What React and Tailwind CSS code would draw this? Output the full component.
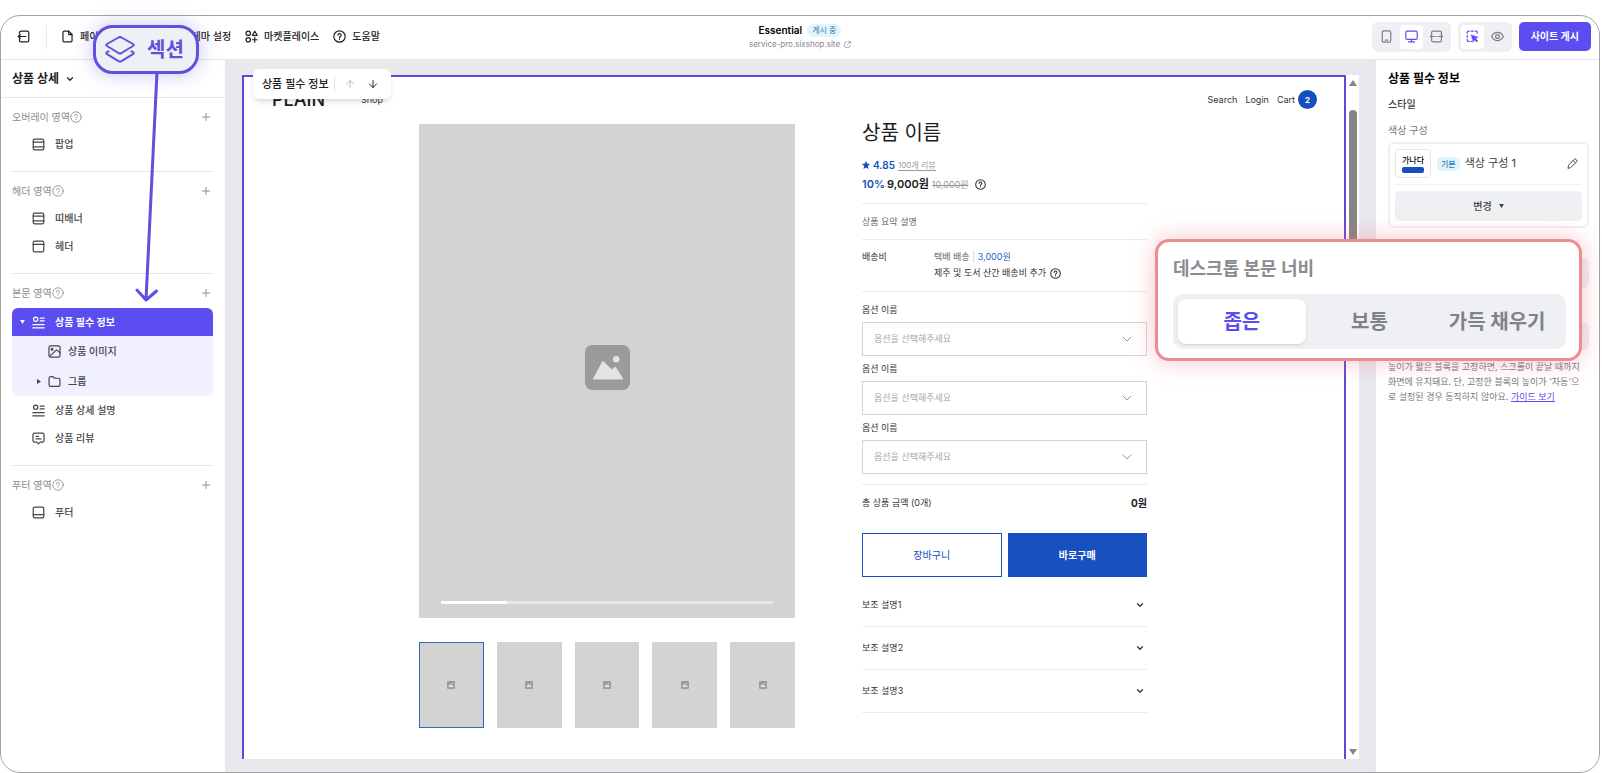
import React, { useState } from "react";
import { ArrowDown, ArrowUp, ChevronDown, Plus } from "lucide-react";

const PAGE_FONT = "font-['Inter','Noto_Sans_CJK_KR',sans-serif]";

// small line icons, all on a 16x16 grid
const ICONS = {
  exit: (
    <>
      <path d="M3 5V3.5A2 2 0 0 1 5 1.5h7.5a2 2 0 0 1 2 2v9a2 2 0 0 1-2 2H5a2 2 0 0 1-2-2V11" />
      <path d="M11 8H1.5M4 5.8 1.5 8 4 10.2" />
    </>
  ),
  file: (
    <>
      <path d="M9.5 1.5H4a1.6 1.6 0 0 0-1.6 1.6v9.8A1.6 1.6 0 0 0 4 14.5h8a1.6 1.6 0 0 0 1.6-1.6V5.6z" />
      <path d="M9.5 1.5v4.1h4.1" />
    </>
  ),
  market: (
    <>
      <circle cx="4" cy="4" r="2.7" />
      <circle cx="4" cy="12" r="2.7" />
      <path d="M12 1.5 15 6.5H9z" />
      <path d="M12 9v6M9 12h6" />
    </>
  ),
  help: (
    <>
      <circle cx="8" cy="8" r="7" />
      <path d="M6 6.4a2 2 0 1 1 2.9 1.8c-.6.3-.9.6-.9 1.2M8 11.3v.5" />
    </>
  ),
  popup: (
    <>
      <rect x="1.5" y="1.5" width="13" height="13" rx="2" />
      <path d="M1.5 5h13M1.5 11h13" />
    </>
  ),
  header: (
    <>
      <rect x="1.5" y="1.5" width="13" height="13" rx="2" />
      <path d="M1.5 5.5h13" />
    </>
  ),
  footer: (
    <>
      <rect x="1.5" y="1.5" width="13" height="13" rx="2" />
      <path d="M1.5 10.5h13" />
    </>
  ),
  detail: (
    <>
      <circle cx="4.5" cy="4" r="2.6" />
      <path d="M10 2.5h5M10 6h5M1 10.5h14M1 14.5h14" />
    </>
  ),
  image: (
    <>
      <rect x="1.2" y="1.2" width="13.6" height="13.6" rx="2" />
      <circle cx="5" cy="5.2" r="1.1" />
      <path d="M2 14 10.5 6l4.3 3.5" />
    </>
  ),
  folder: (
    <path d="M1.3 4a2 2 0 0 1 2-2h2.9l1.8 2h4.7a2 2 0 0 1 2 2v6a2 2 0 0 1-2 2H3.3a2 2 0 0 1-2-2z" />
  ),
  review: (
    <>
      <path d="M3.2 1.5h9.6a2 2 0 0 1 2 2v7a2 2 0 0 1-2 2h-2.6L8 14.7l-2.2-2.2H3.2a2 2 0 0 1-2-2v-7a2 2 0 0 1 2-2z" />
      <path d="M5 5.5h3M5 8.5h6" />
    </>
  ),
  external: (
    <>
      <path d="M6 2.5H3.5a2 2 0 0 0-2 2v8a2 2 0 0 0 2 2h8a2 2 0 0 0 2-2V10" />
      <path d="M9.5 1.5h5v5M14.5 1.5 8 8" />
    </>
  ),
  phone: (
    <>
      <rect x="2.8" y="1" width="10.4" height="14" rx="2" />
      <path d="M6.5 12.5h3" />
    </>
  ),
  desktop: (
    <>
      <rect x="1" y="1.5" width="14" height="10" rx="1.8" />
      <path d="M8 11.5v3M4.5 14.7h7" />
    </>
  ),
  fluid: (
    <>
      <path d="M2 5.5V3a1.5 1.5 0 0 1 1.5-1.5h9A1.5 1.5 0 0 1 14 3v2.5M2 10.5V13a1.5 1.5 0 0 0 1.5 1.5h9A1.5 1.5 0 0 0 14 13v-2.5" />
      <path d="M.5 8h5M10.5 8h5M2 6.6.5 8 2 9.4M14 6.6 15.5 8 14 9.4M7.5 8h1" />
    </>
  ),
  select: (
    <>
      <path d="M1.5 4V3A1.5 1.5 0 0 1 3 1.5h1M6.5 1.5H9M11.5 1.5h1A1.5 1.5 0 0 1 14 3v1M1.5 6.5V9M1.5 11.5v1A1.5 1.5 0 0 0 3 14h1M6.5 14h1" />
      <path d="m6.5 6 8.5 3-3.3 1.5 2.8 2.8-1.7 1.5-2.6-2.9-1.3 2.6z" fill="currentColor" strokeWidth="0.6" />
    </>
  ),
  eye: (
    <>
      <path d="M.8 8S3.3 3 8 3s7.2 5 7.2 5-2.5 5-7.2 5S.8 8 .8 8z" />
      <circle cx="8" cy="8" r="2.4" />
    </>
  ),
  pencil: (
    <>
      <path d="m1.5 14.5.9-4.2 8-8.3a1.9 1.9 0 0 1 2.7 0l.9.9a1.9 1.9 0 0 1 0 2.700l-8.300 8z" />
      <path d="m9 3.8 3.3 3.3" />
    </>
  ),
};

function Icon({ name, className = "size-3", stroke = 1.5 }) {
  return (
    <svg
      viewBox="0 0 16 16"
      fill="none"
      stroke="currentColor"
      strokeWidth={stroke}
      strokeLinecap="round"
      strokeLinejoin="round"
      aria-hidden="true"
      className={`shrink-0 ${className}`}
    >
      {ICONS[name]}
    </svg>
  );
}

function Photo({ className }) {
  return (
    <svg viewBox="0 0 44 44" className={className} aria-hidden="true">
      <rect width="44" height="44" rx="7" fill="#9b9b9b" />
      <path
        d="M8.5 33 17.5 16.5 26 25l3.5-3L36.5 33z"
        fill="#e3e3e3"
        stroke="#e3e3e3"
        strokeWidth="1.5"
        strokeLinejoin="round"
      />
      <circle cx="30.5" cy="14" r="3.2" fill="#e3e3e3" />
    </svg>
  );
}

function TopBar() {
  return (
    <header className="grid grid-cols-[1fr_auto_1fr] items-center h-11 pb-0.5 border-b border-[#e4e5e9] text-[10px] text-[#222]">
      <div className="flex items-center h-full">
        <button aria-label="나가기" className="ml-4">
          <Icon name="exit" className="size-[13px]" />
        </button>
        <span className="ml-4 w-px h-6 bg-[#e9eaed]" />
        <nav className="flex items-center gap-[14px] ml-[14px] font-medium">
          <a href="#pages" className="flex items-center gap-[6px]">
            <Icon name="file" className="size-[13px]" />
            페이지
          </a>
          <a href="#theme" className="ml-[70px]">
            테마 설정
          </a>
          <a href="#market" className="flex items-center gap-[6px]">
            <Icon name="market" className="size-[13px]" />
            마켓플레이스
          </a>
          <a href="#help" className="flex items-center gap-[6px]">
            <Icon name="help" className="size-[13px]" />
            도움말
          </a>
        </nav>
      </div>

      <div className="flex flex-col items-center">
        <div className="flex items-center gap-[5px] h-4">
          <strong className="font-semibold text-black">Essential</strong>
          <span className="px-[5px] rounded-full bg-[#e4f4fe] text-[8px] leading-[13px] text-[#2b7bb0]">게시 중</span>
        </div>
        <a href="#site" className="flex items-center gap-1 text-[8px] leading-[13px] text-[#85878c]">
          service-pro.sixshop.site
          <Icon name="external" className="size-[7px]" />
        </a>
      </div>

      <div className="flex items-center justify-end gap-[7px] pr-2">
        <div className="flex items-center gap-0.5 p-[3px] rounded-md bg-[#eff0f3] text-[#7b7e85]">
          <button aria-label="모바일" className="grid place-items-center w-[23px] h-6">
            <Icon name="phone" className="size-[13px]" />
          </button>
          <button aria-label="데스크톱" className="grid place-items-center w-[23px] h-6 rounded bg-white text-[#5b4df0]">
            <Icon name="desktop" className="size-[13px]" />
          </button>
          <button aria-label="유동 너비" className="grid place-items-center w-[23px] h-6">
            <Icon name="fluid" className="size-[13px]" />
          </button>
        </div>
        <div className="flex items-center gap-0.5 p-[3px] rounded-md bg-[#eff0f3] text-[#7b7e85]">
          <button aria-label="선택" className="grid place-items-center w-[23px] h-6 rounded bg-white text-[#5b4df0]">
            <Icon name="select" className="size-[13px]" />
          </button>
          <button aria-label="미리보기" className="grid place-items-center w-[23px] h-6">
            <Icon name="eye" className="size-[13px]" />
          </button>
        </div>
        <button className="px-3 h-[29px] rounded-[5px] bg-[#5b4df0] font-bold text-white">사이트 게시</button>
      </div>
    </header>
  );
}

function Area({ title, last, children }) {
  return (
    <section className={`ml-[11px] mr-3 pt-[6px] pb-[13px] ${last ? "" : "border-b border-[#e6e7ea]"}`}>
      <div className="flex items-center justify-between h-[26px] pr-px text-[#8a8c91]">
        <h3 className="flex items-center">
          {title}
          <Icon name="help" className="size-3" stroke={1.1} />
        </h3>
        <button aria-label={`${title} 추가`}>
          <Plus size={12} strokeWidth={2} />
        </button>
      </div>
      {children}
    </section>
  );
}

function Item({ icon, label }) {
  return (
    <a href="#item" className="flex items-center gap-[10px] h-7 pl-5 font-medium text-[#44464a]">
      <Icon name={icon} className="size-[13px]" />
      {label}
    </a>
  );
}

function LeftPanel() {
  return (
    <aside className="w-[225px] shrink-0 border-r border-[#e4e5e9] text-[10px]">
      <button className="flex items-center gap-[6px] w-full h-[38px] px-[11px] border-b border-[#e6e7ea] text-[12px] font-bold text-[#1d1d1f]">
        상품 상세
        <ChevronDown size={10} strokeWidth={3} />
      </button>
      <Area title="오버레이 영역">
        <Item icon="popup" label="팝업" />
      </Area>
      <Area title="헤더 영역">
        <Item icon="popup" label="띠배너" />
        <Item icon="header" label="헤더" />
      </Area>
      <Area title="본문 영역">
        <div className="mt-0.5 rounded-md overflow-hidden bg-[#f1f0fe] font-medium text-[#44464a]">
          <a href="#item" className="flex items-center h-7 pl-2 bg-[#5b4df0] font-bold text-white">
            <svg viewBox="0 0 6 5" className="w-[5px] h-1 mr-[7px]" fill="currentColor" aria-hidden="true">
              <path d="M0 0h6L3 5z" />
            </svg>
            <Icon name="detail" className="size-[13px] mr-[10px]" />
            상품 필수 정보
          </a>
          <a href="#item" className="flex items-center gap-[7px] h-[30px] pl-9">
            <Icon name="image" className="size-[13px]" />
            상품 이미지
          </a>
          <a href="#item" className="flex items-center gap-[7px] h-[30px] pl-[25px]">
            <svg viewBox="0 0 5 6" className="w-1 h-[5px]" fill="currentColor" aria-hidden="true">
              <path d="M0 0v6l5-3z" />
            </svg>
            <Icon name="folder" className="size-[13px]" />
            그룹
          </a>
        </div>
        <Item icon="detail" label="상품 상세 설명" />
        <Item icon="review" label="상품 리뷰" />
      </Area>
      <Area title="푸터 영역" last>
        <Item icon="footer" label="푸터" />
      </Area>
    </aside>
  );
}

function Gallery() {
  return (
    <div className="w-[376px] shrink-0">
      <div className="relative grid place-items-center h-[494px] pb-2 bg-[#d3d3d3]">
        <Photo className="size-[45px]" />
        <div className="absolute inset-x-[22px] bottom-[14px] h-[3px] bg-[#e6e6e6]">
          <div className="w-1/5 h-full bg-white" />
        </div>
      </div>
      <div className="grid grid-cols-5 gap-[13px] mt-6">
        {[1, 2, 3, 4, 5].map((n) => (
          <button
            key={n}
            aria-label={`상품 이미지 ${n}`}
            className={`grid place-items-center h-[86px] bg-[#d3d3d3] ${n === 1 ? "border border-[#2f6bc4]" : ""}`}
          >
            <Photo className="size-2" />
          </button>
        ))}
      </div>
    </div>
  );
}

function OptionSelect({ id }) {
  return (
    <div>
      <label htmlFor={id} className="block h-[25px] leading-[25px] text-[#333]">
        옵션 이름
      </label>
      <div className="relative">
        <select id={id} className="appearance-none w-full h-[34px] px-[11px] border border-[#d4d4d4] bg-white text-[#a8a8a8]">
          <option>옵션을 선택해주세요</option>
        </select>
        <ChevronDown size={16} strokeWidth={1.5} className="absolute right-3 top-[9px] text-[#999] pointer-events-none" />
      </div>
    </div>
  );
}

function ProductInfo() {
  return (
    <div className="flex-1 pr-[22px] text-[9px] text-[#333]">
      <h1 className="pt-px text-[20px] leading-4 text-[#1c1c1e]">상품 이름</h1>
      <div className="flex items-center gap-[3px] h-5 mt-[14px]">
        <svg viewBox="0 0 20 20" className="size-2" fill="#1651bf" aria-hidden="true">
          <path d="m10 0 3 6.5 7 .9-5.2 4.9L16.2 20 10 16.200 3.800 20l1.400-7.700L0 7.400l7-.9z" />
        </svg>
        <b className="text-[10px] font-semibold text-[#1651bf]">4.85</b>
        <a href="#reviews" className="text-[8px] leading-[10px] text-[#999] border-b border-[#999]">100개 리뷰</a>
      </div>
      <div className="flex items-center gap-[2px] h-5 pb-px text-[11px]">
        <b className="text-[#1651bf] font-semibold">10%</b>
        <b className="font-semibold text-[#1c1c1e]">9,000원</b>
        <s className="ml-px text-[9px] text-[#999]">10,000원</s>
        <Icon name="help" className="size-[11px] ml-1" />
      </div>
      <div className="mt-2 border-y border-[#ececec] h-[37px] leading-[35px] text-[#666]">상품 요약 설명</div>
      <dl className="flex h-[52px] pt-[9px] border-b border-[#ececec] leading-4">
        <dt className="w-[72px]">배송비</dt>
        <dd>
          <p className="text-[#666]">
            택배 배송 <span className="text-[#ccc]">|</span> <span className="text-[#2563c9]">3,000원</span>
          </p>
          <p className="flex items-center gap-1">
            제주 및 도서 산간 배송비 추가
            <Icon name="help" className="size-[11px]" />
          </p>
        </dd>
      </dl>
      <div className="pt-[5px] pb-[10px] border-b border-[#ececec]">
        <OptionSelect id="option-1" />
        <OptionSelect id="option-2" />
        <OptionSelect id="option-3" />
      </div>
      <div className="flex items-center justify-between h-9">
        <span>총 상품 금액 (0개)</span>
        <b className="text-[10px] font-bold text-[#1c1c1e]">0원</b>
      </div>
      <div className="grid grid-cols-2 gap-[6px] mt-3 text-[10px]">
        <button className="h-11 border border-[#1651bf] text-[#1651bf]">장바구니</button>
        <button className="h-11 bg-[#1651bf] font-bold text-white">바로구매</button>
      </div>
      <div className="mt-[7px]">
        {["보조 설명1", "보조 설명2", "보조 설명3"].map((t) => (
          <button key={t} className="flex items-center justify-between w-full h-[43px] pr-[2px] border-b border-[#ececec]">
            {t}
            <ChevronDown size={10} strokeWidth={3} />
          </button>
        ))}
      </div>
    </div>
  );
}

function Canvas() {
  return (
    <main className="flex flex-1 min-w-0 pt-[15px] pb-[13px] px-4 bg-[#e8e9ed]">
      <div className="relative flex-1 border-2 border-b-0 border-[#5a4bdc] bg-white">
        <div className="flex items-center justify-between h-[45px] pl-7 pr-[27px] text-[9px] text-[#333]">
          <div className="flex items-center gap-9">
            <span className="text-[18px] font-medium text-[#1c1c1e]">PLAIN</span>
            <a href="#shop">Shop</a>
          </div>
          <nav className="flex items-center gap-2">
            <a href="#search">Search</a>
            <a href="#login">Login</a>
            <a href="#cart" className="flex items-center gap-[3px]">
              Cart
              <span className="grid place-items-center size-[19px] rounded-full bg-[#144fbd] text-[8px] font-bold text-white">2</span>
            </a>
          </nav>
        </div>
        <div className="flex gap-[67px] w-[750px] mx-auto mt-[2px]">
          <Gallery />
          <ProductInfo />
        </div>

        {/* floating block toolbar */}
        <div className="absolute left-[9px] -top-2 flex items-center h-[30px] pl-[9px] pr-3 rounded-md bg-white shadow-md text-[11px] font-medium text-[#222]">
          상품 필수 정보
          <span className="w-px h-4 ml-[5px] mr-[9px] bg-[#e4e5e9]" />
          <button aria-label="위로" className="text-[#b5b7bb]">
            <ArrowUp size={12} />
          </button>
          <button aria-label="아래로" className="ml-[11px]">
            <ArrowDown size={12} />
          </button>
        </div>
      </div>

      {/* scrollbar */}
      <div className="flex flex-col items-center w-[13px] py-1 bg-white">
        <svg viewBox="0 0 8 6" className="w-2 h-[6px] mt-px" fill="#858585" aria-hidden="true">
          <path d="M4 0 8 6H0z" />
        </svg>
        <div className="w-2 h-60 mt-6 rounded-full bg-[#858585]" />
        <svg viewBox="0 0 8 6" className="w-2 h-[6px] mt-auto" fill="#858585" aria-hidden="true">
          <path d="M0 0h8L4 6z" />
        </svg>
      </div>
    </main>
  );
}

function RightPanel() {
  return (
    <aside className="w-[224px] shrink-0 pl-3 pr-[10px] pt-[11px] border-l border-[#e4e5e9] text-[10px] text-[#3a3c40]">
      <h2 className="text-[12px] leading-4 font-bold text-black">상품 필수 정보</h2>
      <h3 className="mt-[9px] leading-4 font-medium">스타일</h3>
      <p className="mt-[10px] leading-4 text-[#77797e]">색상 구성</p>
      <div className="mt-1 p-[5px] border-2 border-[#f0f0f3] rounded-md">
        <div className="flex items-center pb-[6px] border-b border-[#f0f0f3]">
          <div className="flex flex-col items-center justify-center gap-[2px] w-9 h-[29px] border border-[#e6e7ea] rounded">
            <span className="text-[8px] leading-[10px] font-medium text-black">가나다</span>
            <span className="w-[22px] h-[6px] rounded-[2px] bg-[#144fbd]" />
          </div>
          <span className="ml-[6px] px-1 rounded bg-[#e4f4fe] text-[8px] leading-[14px] font-medium text-[#2b7bb0]">기본</span>
          <span className="ml-[5px] text-[11px]">색상 구성 1</span>
          <button aria-label="수정" className="ml-auto mr-1">
            <Icon name="pencil" className="size-[11px]" stroke={1.3} />
          </button>
        </div>
        <button className="flex items-center justify-center gap-[7px] w-full h-[30px] mt-[6px] rounded-[5px] bg-[#eff0f3] font-medium">
          변경
          <svg viewBox="0 0 6 5" className="w-[5px] h-1" fill="currentColor" aria-hidden="true">
            <path d="M0 0h6L3 5z" />
          </svg>
        </button>
      </div>
      <div className="h-[30px] mt-[30px] rounded-md bg-[#eff0f3]" />
      <div className="h-[28px] mt-[34px] rounded-md bg-[#eff0f3]" />
      <p className="mt-[9px] text-[9px] leading-[15px] whitespace-nowrap text-[#77797e]">
        높이가 짧은 블록을 고정하면, 스크롤이 끝날 때까지
        <br />
        화면에 유지돼요. 단, 고정한 블록의 높이가 '자동'으
        <br />
        로 설정된 경우 동작하지 않아요.{" "}
        <a href="#guide" className="text-[#5b4df0] underline">가이드 보기</a>
      </p>
    </aside>
  );
}

const WIDTHS = ["좁은", "보통", "가득 채우기"];

function WidthCallout() {
  const [width, setWidth] = useState(WIDTHS[0]);

  return (
    <section className="absolute right-5 top-[239px] w-[427px] h-[122px] pl-[15px] pr-[13px] pt-4 rounded-[14px] border-3 border-[#ec8d94] bg-white shadow-[0_0_24px_rgba(236,110,120,0.4)]">
      <h2 className="text-[18px] leading-[22px] font-bold text-[#8a8c90]">데스크톱 본문 너비</h2>
      <div className="grid grid-cols-3 h-[55px] mt-[14px] p-[5px] rounded-[10px] bg-[#eef0f4] text-[20px] font-bold">
        {WIDTHS.map((w) => (
          <button
            key={w}
            aria-pressed={w === width}
            onClick={() => setWidth(w)}
            className={w === width ? "rounded-lg bg-white shadow text-[#5b4df0]" : "text-[#808287]"}
          >
            {w}
          </button>
        ))}
      </div>
    </section>
  );
}

function SectionCallout() {
  return (
    <>
      <svg viewBox="0 0 30 232" className="absolute left-[132px] top-[72px] w-[30px] h-[232px]" fill="none" stroke="#5f51dc" strokeWidth="3" strokeLinecap="round" strokeLinejoin="round" aria-hidden="true">
        <path d="M25 0 14 228M5 218l9 10 10.5-9" />
      </svg>
      <div className="absolute left-[93px] top-[25px] flex items-center gap-3 h-[49px] pl-[9px] pr-3 rounded-[20px] border-3 border-[#5f51dc] bg-[#edf0f5] shadow-[0_0_20px_rgba(95,81,220,0.35)] text-[20px] font-bold text-[#5f51dc]">
        <svg viewBox="0 0 30 27" className="w-[30px] h-[27px]" fill="none" stroke="currentColor" strokeWidth="2" strokeLinejoin="round" strokeLinecap="round" aria-hidden="true">
          <path d="M13.5 1.5q1.500-.8 3 0L28 8q1.500 1 0 2l-11.500 7q-1.500.8-3 0L2 10Q.5 9 2 8z" />
          <path d="M3.5 15.300 2 16.200q-1.500 1 0 2l11.500 7q1.500.8 3 0l11.500-7q1.500-1 0-2l-1.500-.9" />
        </svg>
        섹션
      </div>
    </>
  );
}

export default function App() {
  return (
    <div className={`relative flex flex-col min-h-screen pt-[15px] pr-0.5 bg-white ${PAGE_FONT}`}>
      <div className="flex flex-col flex-1 border border-[#a3a3a5] rounded-[20px] overflow-hidden bg-white">
        <TopBar />
        <div className="flex flex-1">
          <LeftPanel />
          <Canvas />
          <RightPanel />
        </div>
      </div>
      <SectionCallout />
      <WidthCallout />
    </div>
  );
}
